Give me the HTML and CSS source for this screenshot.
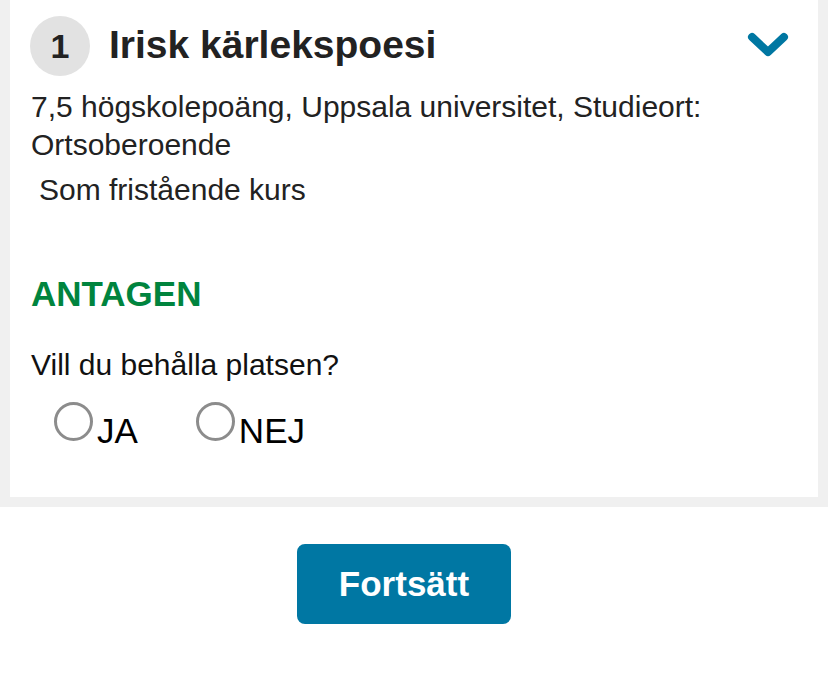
FILE: index.html
```html
<!DOCTYPE html>
<html lang="sv">
<head>
<meta charset="utf-8">
<link rel="stylesheet" href="styles.css">
</head>
<body>
<div class="frame">
  <section class="card">
    <header class="head">
      <span class="num">1</span>
      <h1 class="title">Irisk kärlekspoesi</h1>
      <svg class="chev" width="42" height="28" viewBox="0 0 42 28"><path d="M5 5 L21 20 L37 5" fill="none" stroke="#0077a2" stroke-width="8" stroke-linecap="round" stroke-linejoin="round"/></svg>
    </header>
    <p class="info">7,5 högskolepoäng, Uppsala universitet, Studieort: Ortsoberoende</p>
    <p class="type">Som fristående kurs</p>
    <p class="status">ANTAGEN</p>
    <p class="question">Vill du behålla platsen?</p>
    <div class="choices">
      <label class="choice"><span class="radio"></span><span class="lbl">JA</span></label>
      <label class="choice"><span class="radio"></span><span class="lbl">NEJ</span></label>
    </div>
  </section>
</div>
<div class="actions">
  <button class="btn">Fortsätt</button>
</div>
</body>
</html>
```
FILE: styles.css
```css
html, body {
  margin: 0;
  padding: 0;
  background: #ffffff;
  font-family: "Liberation Sans", Arial, sans-serif;
  color: #222222;
}
.frame {
  background: #f0f0f0;
  padding: 0 10px 10px 10px;
}
.card {
  background: #ffffff;
  padding: 16px 29px 46px 21px;
}
.head {
  display: flex;
  align-items: flex-start;
}
.num {
  width: 60px;
  height: 60px;
  border-radius: 50%;
  background: #e2e2e2;
  margin-left: -1px;
  display: flex;
  align-items: center;
  justify-content: center;
  font-weight: bold;
  font-size: 34px;
  color: #222;
}
.title {
  margin: 0 0 0 19px;
  font-size: 39px;
  line-height: 57px;
  font-weight: bold;
  flex: 1;
  color: #222;
}
.chev {
  margin-top: 16px;
}
.info {
  margin: 12px 0 0 0;
  font-size: 30px;
  line-height: 38px;
}
.type {
  margin: 7px 0 0 8px;
  font-size: 30px;
  line-height: 38px;
}
.status {
  margin: 65px 0 0 0;
  font-size: 35px;
  font-weight: bold;
  color: #00843e;
  line-height: 40px;
}
.question {
  margin: 32px 0 0 0;
  font-size: 30px;
  line-height: 38px;
  color: #111;
}
.choices {
  display: flex;
  gap: 58px;
  margin: 18px 0 0 23px;
}
.choice {
  display: flex;
  align-items: flex-start;
  color: #000;
}
.radio {
  width: 33px;
  height: 33px;
  border: 3px solid #8c8c8c;
  border-radius: 50%;
  margin-right: 4px;
}
.lbl {
  font-size: 35px;
  line-height: 40px;
  margin-top: 9px;
}
.actions {
  display: flex;
  justify-content: center;
  padding-top: 37px;
}
.btn {
  width: 214px;
  height: 80px;
  border: none;
  border-radius: 8px;
  background: #0077a3;
  color: #fff;
  font-family: "Liberation Sans", Arial, sans-serif;
  font-weight: bold;
  font-size: 35px;
  margin-right: 20px;
}
```
